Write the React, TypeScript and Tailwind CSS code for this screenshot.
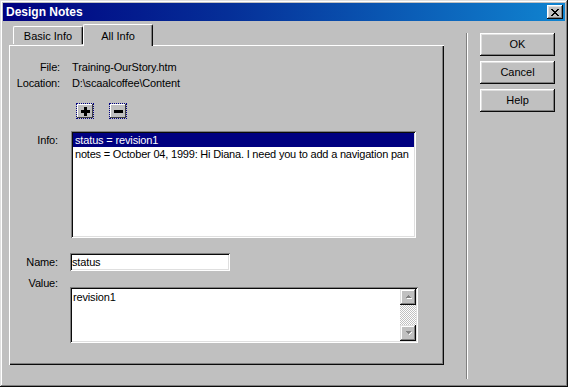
import React from "react";

function PlusIcon() {
  return (
    <svg width="9" height="9" viewBox="0 0 9 9" shapeRendering="crispEdges">
      <rect x="3" y="0" width="3" height="9" fill="#000" />
      <rect x="0" y="3" width="9" height="3" fill="#000" />
    </svg>
  );
}

function MinusIcon() {
  return (
    <svg width="9" height="9" viewBox="0 0 9 9" shapeRendering="crispEdges">
      <rect x="0" y="3" width="9" height="3" fill="#000" />
    </svg>
  );
}

function CloseIcon() {
  return (
    <svg width="8" height="7" viewBox="0 0 8 7" shapeRendering="crispEdges">
      <path d="M0 0h2v1h1v1h2v-1h1v-1h2v1h-1v1h-1v1h-1v1h1v1h1v1h1v1h-2v-1h-1v-1h-2v1h-1v1h-2v-1h1v-1h1v-1h1v-1h-1v-1h-1v-1h-1z" fill="#000" />
    </svg>
  );
}

function SmallTool({ children }: { children: React.ReactNode }) {
  return (
    <div className="w-[18px] h-[16px] border border-dotted border-[#000080] bg-[#c0c0c0] flex items-center justify-center shadow-[inset_-1px_-1px_#404040,inset_1px_1px_#ffffff]">
      {children}
    </div>
  );
}

function DlgButton({ label }: { label: string }) {
  return (
    <div className="w-[75px] h-[23px] flex items-center justify-center bg-[#c0c0c0] shadow-[inset_-1px_-1px_#0a0a0a,inset_1px_1px_#ffffff,inset_-2px_-2px_#808080,inset_2px_2px_#dfdfdf] text-[11px] leading-[13px] text-black">
      {label}
    </div>
  );
}

export default function App() {
  return (
    <div className="w-[568px] h-[387px] p-[3px] bg-[#c0c0c0] shadow-[inset_-1px_-1px_#0a0a0a,inset_1px_1px_#dfdfdf,inset_-2px_-2px_#808080,inset_2px_2px_#ffffff] flex flex-col font-['Liberation_Sans',Arial,sans-serif] text-black overflow-hidden">
      {/* Title bar */}
      <div className="h-[18px] shrink-0 flex items-center justify-between bg-[linear-gradient(to_right,#000080_0%,#052f98_40%,#1084d0_100%)] pl-[3px] pr-[2px]">
        <span className="text-white font-bold text-[12px] leading-[14px]">Design Notes</span>
        <div className="w-[16px] h-[14px] flex items-center justify-center bg-[#c0c0c0] shadow-[inset_-1px_-1px_#0a0a0a,inset_1px_1px_#ffffff,inset_-2px_-2px_#808080,inset_2px_2px_#dfdfdf]">
          <CloseIcon />
        </div>
      </div>

      {/* Body */}
      <div className="flex flex-1 min-h-0">
        {/* Left column: tabs + panel */}
        <div className="pl-[6px] pt-[3px] w-[441px] shrink-0 flex flex-col">
          <div className="flex items-end h-[21px] pl-[4px] relative z-10">
            <div className="w-[70px] h-[18px] mb-[1px] flex items-center justify-center border-t border-l border-white border-r border-r-[#0a0a0a] rounded-tl-[2px] rounded-tr-[2px] shadow-[inset_-1px_0_#808080] text-[11px] leading-[13px] pt-[2px]">
              Basic Info
            </div>
            <div className="w-[70px] h-[22px] -mb-[1px] flex items-center justify-center bg-[#c0c0c0] border-t border-l border-white border-r border-r-[#0a0a0a] rounded-tl-[2px] rounded-tr-[2px] shadow-[inset_-1px_0_#808080] text-[11px] leading-[13px] pt-[1px]">
              All Info
            </div>
          </div>

          <div className="w-[435px] h-[320px] shadow-[inset_1px_1px_#ffffff,inset_-1px_-1px_#0a0a0a,inset_-2px_-2px_#808080] pl-[1px] pt-[1px] flex flex-col text-[11px] tracking-[-0.15px]">
            {/* File */}
            <div className="flex mt-[13px] h-[16px] leading-[16px]">
              <div className="w-[50px] text-right">File:</div>
              <div className="ml-[12px]">Training-OurStory.htm</div>
            </div>
            <div className="flex h-[16px] leading-[16px]">
              <div className="w-[50px] text-right">Location:</div>
              <div className="ml-[12px]">D:\scaalcoffee\Content</div>
            </div>

            {/* + - */}
            <div className="flex mt-[12px] pl-[66px] gap-[15px]">
              <SmallTool>
                <PlusIcon />
              </SmallTool>
              <SmallTool>
                <MinusIcon />
              </SmallTool>
            </div>

            {/* Info list */}
            <div className="flex mt-[12px]">
              <div className="w-[48px] text-right leading-[14px] pt-[2px]">Info:</div>
              <div className="ml-[13px] w-[345px] h-[107px] bg-white shadow-[inset_1px_1px_#808080,inset_-1px_-1px_#ffffff,inset_2px_2px_#0a0a0a,inset_-2px_-2px_#dfdfdf] p-[2px] overflow-hidden">
                <div className="h-[14px] leading-[14px] bg-[#000080] text-white pl-[2px] whitespace-nowrap">status = revision1</div>
                <div className="h-[14px] leading-[14px] pl-[2px] whitespace-nowrap overflow-hidden tracking-[-0.2px]">
                  notes = October 04, 1999: Hi Diana. I need you to add a navigation pan
                </div>
              </div>
            </div>

            {/* Name */}
            <div className="flex items-center mt-[15px]">
              <div className="w-[48px] text-right leading-[14px]">Name:</div>
              <div className="ml-[12px] w-[160px] h-[18px] bg-white shadow-[inset_1px_1px_#808080,inset_-1px_-1px_#ffffff,inset_2px_2px_#0a0a0a,inset_-2px_-2px_#dfdfdf] pl-[2px] leading-[18px]">
                status
              </div>
            </div>

            {/* Value */}
            <div className="flex mt-[5px]">
              <div className="w-[48px] text-right leading-[14px]">Value:</div>
              <div className="ml-[12px] mt-[11px] w-[348px] h-[56px] bg-white shadow-[inset_1px_1px_#808080,inset_-1px_-1px_#ffffff,inset_2px_2px_#0a0a0a,inset_-2px_-2px_#dfdfdf] p-[2px] flex">
                <div className="flex-1 leading-[14px] pt-[1px] pl-[1px]">revision1</div>
                <div className="w-[16px] flex flex-col bg-[repeating-conic-gradient(#c0c0c0_0%_25%,#ffffff_0%_50%)] bg-[length:2px_2px]">
                  <div className="w-[16px] h-[16px] bg-[#c0c0c0] shadow-[inset_-1px_-1px_#0a0a0a,inset_1px_1px_#dfdfdf,inset_-2px_-2px_#808080,inset_2px_2px_#ffffff] flex items-center justify-center">
                    <svg width="9" height="6" viewBox="0 0 9 6" shapeRendering="crispEdges">
                      <path d="M4 1h1v1h1v1h1v1h-5v-1h1v-1h1z" fill="#808080" />
                      <path d="M3 4h5v1h-5z" fill="#ffffff" />
                    </svg>
                  </div>
                  <div className="flex-1" />
                  <div className="w-[16px] h-[16px] bg-[#c0c0c0] shadow-[inset_-1px_-1px_#0a0a0a,inset_1px_1px_#dfdfdf,inset_-2px_-2px_#808080,inset_2px_2px_#ffffff] flex items-center justify-center">
                    <svg width="9" height="6" viewBox="0 0 9 6" shapeRendering="crispEdges">
                      <path d="M2 1h5v1h-1v1h-1v1h-1v-1h-1v-1h-1z" fill="#808080" />
                      <path d="M5 4h1v-1h1v-1h1v1h-1v1h-1v1h-1z" fill="#ffffff" />
                    </svg>
                  </div>
                </div>
              </div>
            </div>
          </div>
        </div>

        {/* Separator */}
        <div className="ml-[22px] mt-[12px] w-[2px] h-[346px] shadow-[inset_1px_0_#808080,inset_-1px_0_#ffffff]" />

        {/* Buttons */}
        <div className="ml-[12px] mt-[12px] flex flex-col gap-[5px]">
          <DlgButton label="OK" />
          <DlgButton label="Cancel" />
          <DlgButton label="Help" />
        </div>
      </div>
    </div>
  );
}
